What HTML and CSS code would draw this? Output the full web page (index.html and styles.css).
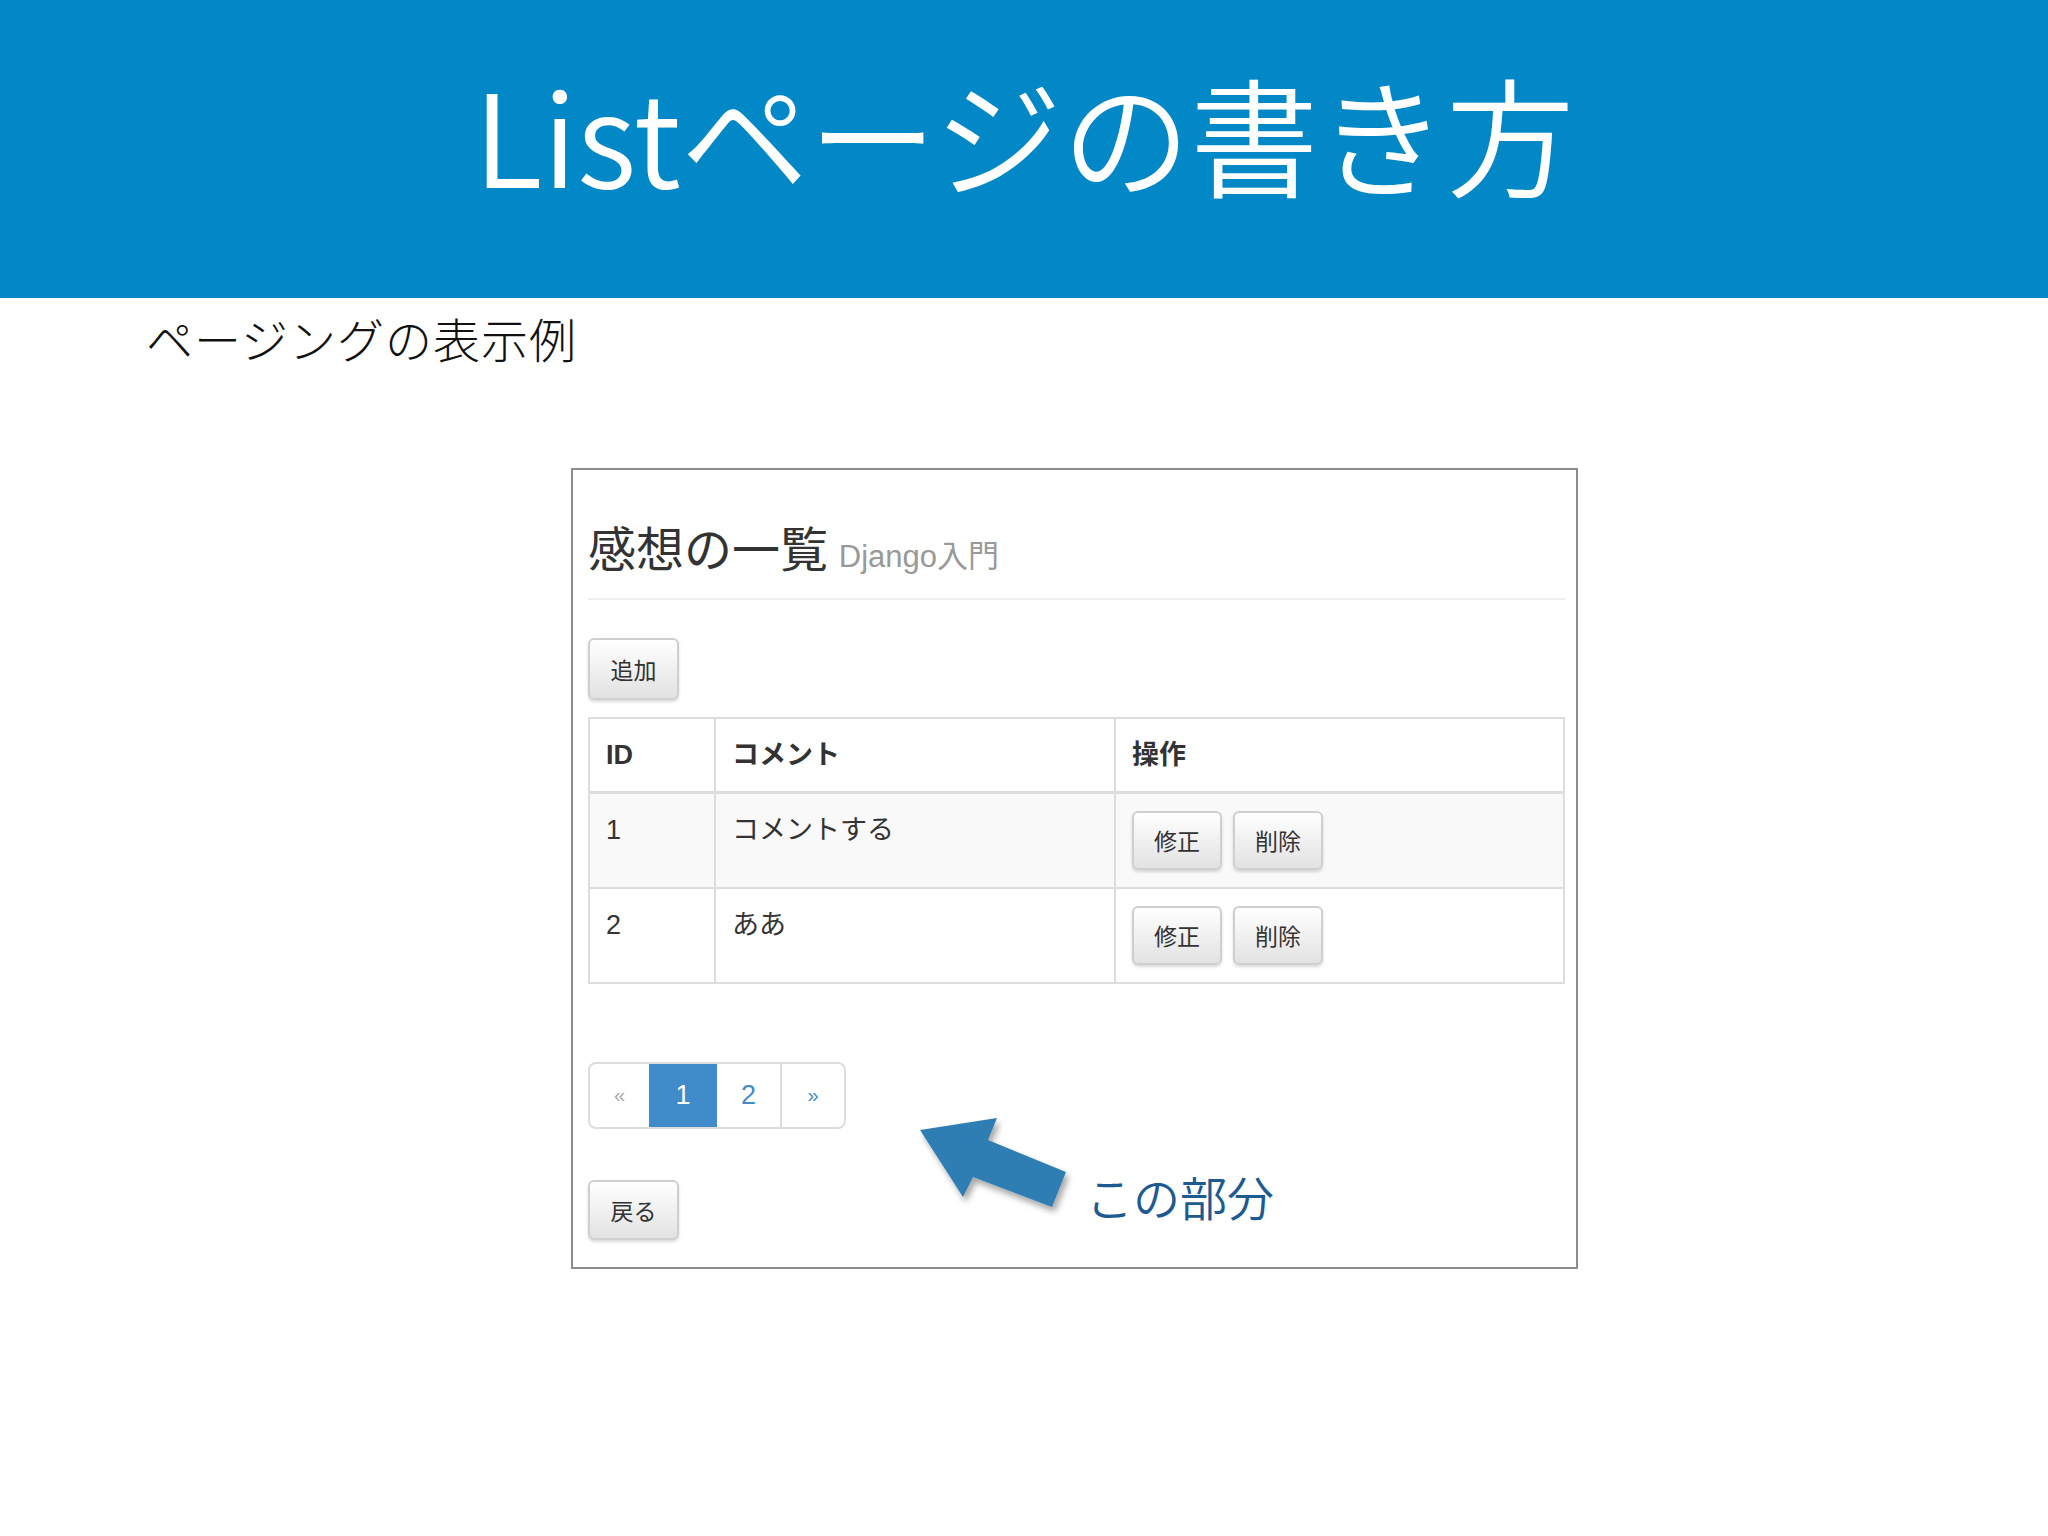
FILE: index.html
```html
<!DOCTYPE html>
<html lang="ja">
<head>
<meta charset="utf-8">
<title>Listページの書き方</title>
<link rel="stylesheet" href="styles.css">
</head>
<body>
<header class="slide-header">
  <h1 class="slide-title">Listページの書き方</h1>
</header>
<p class="slide-sub">ページングの表示例</p>

<section class="shot">
  <div class="page-header">
    <h3 class="page-title">感想の一覧 <small class="page-small">Django入門</small></h3>
  </div>
  <button class="btn btn-add">追加</button>
  <table class="tbl">
    <thead>
      <tr>
        <th class="c-id">ID</th>
        <th class="c-comment">コメント</th>
        <th class="c-ops">操作</th>
      </tr>
    </thead>
    <tbody>
      <tr class="striped">
        <td>1</td>
        <td>コメントする</td>
        <td class="ops"><button class="btn btn-row">修正</button><button class="btn btn-row">削除</button></td>
      </tr>
      <tr>
        <td>2</td>
        <td>ああ</td>
        <td class="ops"><button class="btn btn-row">修正</button><button class="btn btn-row">削除</button></td>
      </tr>
    </tbody>
  </table>
  <ul class="pager">
    <li class="pg pg-prev">«</li>
    <li class="pg pg-active">1</li>
    <li class="pg pg-num">2</li>
    <li class="pg pg-next">»</li>
  </ul>
  <button class="btn btn-back">戻る</button>

  <svg class="arrow" width="1007" height="799" viewBox="0 0 1007 799">
    <defs>
      <filter id="sh" x="-20%" y="-20%" width="140%" height="140%">
        <feDropShadow dx="3" dy="5" stdDeviation="3" flood-color="#000" flood-opacity="0.35"/>
      </filter>
    </defs>
    <polygon filter="url(#sh)" fill="#2f7db3" points="349,662 426,650 417,672 495,704 481,739 402,709 392,729"/>
  </svg>
  <span class="callout">この部分</span>
</section>
</body>
</html>
```
FILE: styles.css
```css
html, body {
  margin: 0;
  padding: 0;
  background: #ffffff;
}
body {
  width: 2048px;
  height: 1536px;
  font-family: "Noto Sans CJK JP", "Liberation Sans", sans-serif;
}
.slide-header {
  height: 298px;
  background: #0288c7;
  display: flex;
  justify-content: center;
  align-items: center;
}
.slide-title {
  margin: 0 0 32px 0;
  color: #ffffff;
  font-size: 128px;
  font-weight: 350;
  line-height: 1;
  letter-spacing: 0;
}
.slide-sub {
  margin: 14px 0 0 146px;
  font-size: 47px;
  line-height: 1.1;
  font-weight: 300;
  letter-spacing: 1px;
  color: #111;
}
.shot {
  position: relative;
  box-sizing: border-box;
  margin: 104px 0 0 571px;
  width: 1007px;
  height: 801px;
  border: 2px solid #8c8c8c;
  padding: 0 11px 0 15px;
  color: #333;
  font-family: "Liberation Sans", "Noto Sans CJK JP", sans-serif;
}
.page-header {
  margin-top: 48px;
  padding-bottom: 13px;
  border-bottom: 2px solid #eeeeee;
}
.page-title {
  margin: 0;
  font-family: "Noto Sans CJK JP", sans-serif;
  font-size: 48px;
  font-weight: 400;
  line-height: 56px;
  color: #333;
}
.page-small {
  font-family: "Liberation Sans", "Noto Sans CJK JP", sans-serif;
  font-size: 31px;
  color: #999;
  font-weight: 400;
}
.btn {
  box-sizing: border-box;
  display: inline-flex;
  align-items: center;
  justify-content: center;
  border: 2px solid #cfcfcf;
  border-radius: 6px;
  background: linear-gradient(#ffffff, #e2e2e2);
  box-shadow: 0 2px 3px rgba(0,0,0,0.15);
  color: #333;
  font-family: "Noto Sans CJK JP", sans-serif;
  font-size: 23px;
  padding: 0;
}
.btn-add {
  display: flex;
  margin-top: 38px;
  width: 91px;
  height: 62px;
}
.tbl {
  margin-top: 17px;
  width: 977px;
  border-collapse: collapse;
  border: 2px solid #dddddd;
  font-family: "Liberation Sans", "Noto Sans CJK JP", sans-serif;
  font-size: 27px;
  color: #333;
}
.tbl th, .tbl td {
  border: 2px solid #dddddd;
  text-align: left;
  vertical-align: top;
  padding: 17px 16px;
  line-height: 38px;
}
.tbl th {
  font-weight: 700;
  border-bottom: 3px solid #dddddd;
}
.c-id { width: 92px; }
.c-comment { width: 366px; }
.tbl .ops {
  padding: 17px 16px 17px 16px;
  line-height: 0;
}
.striped td { background: #f9f9f9; }
.btn-row {
  width: 90px;
  height: 59px;
  margin-right: 11px;
  line-height: 1;
}
.pager {
  list-style: none;
  margin: 78px 0 0 0;
  padding: 0;
  display: flex;
  width: max-content;
  border: 2px solid #dddddd;
  border-radius: 8px;
  overflow: hidden;
  font-family: "Liberation Sans", sans-serif;
  font-size: 27px;
}
.pg {
  display: flex;
  align-items: center;
  justify-content: center;
  height: 63px;
  box-sizing: border-box;
}
.pg-prev { width: 59px; color: #aaa; font-size: 20px; }
.pg-active { width: 68px; background: #428bca; color: #fff; }
.pg-num { width: 65px; color: #428bca; border-right: 2px solid #dddddd; }
.pg-next { width: 62px; color: #428bca; font-size: 20px; }
.btn-back {
  display: flex;
  margin-top: 51px;
  width: 91px;
  height: 60px;
}
.arrow {
  position: absolute;
  left: -2px;
  top: -2px;
  pointer-events: none;
}
.callout {
  position: absolute;
  left: 513px;
  top: 698px;
  font-family: "Noto Sans CJK JP", sans-serif;
  font-size: 47px;
  line-height: 1.2;
  color: #1d5a90;
  font-weight: 350;
}
```
